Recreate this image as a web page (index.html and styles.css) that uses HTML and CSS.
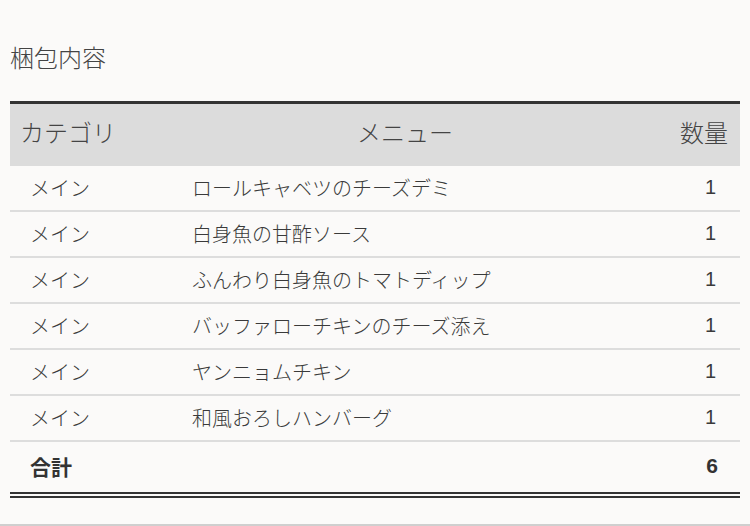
FILE: index.html
```html
<!DOCTYPE html>
<html lang="ja">
<head>
<meta charset="utf-8">
<link rel="stylesheet" href="styles.css">
</head>
<body>
<div class="page">
  <h2 class="title">梱包内容</h2>
  <table class="pack">
    <colgroup>
      <col class="c-cat">
      <col class="c-menu">
      <col class="c-qty">
    </colgroup>
    <thead>
      <tr>
        <th class="cat">カテゴリ</th>
        <th class="menu">メニュー</th>
        <th class="qty">数量</th>
      </tr>
    </thead>
    <tbody>
      <tr><td class="cat">メイン</td><td class="menu">ロールキャベツのチーズデミ</td><td class="qty">1</td></tr>
      <tr><td class="cat">メイン</td><td class="menu">白身魚の甘酢ソース</td><td class="qty">1</td></tr>
      <tr><td class="cat">メイン</td><td class="menu">ふんわり白身魚のトマトディップ</td><td class="qty">1</td></tr>
      <tr><td class="cat">メイン</td><td class="menu">バッファローチキンのチーズ添え</td><td class="qty">1</td></tr>
      <tr><td class="cat">メイン</td><td class="menu">ヤンニョムチキン</td><td class="qty">1</td></tr>
      <tr><td class="cat">メイン</td><td class="menu">和風おろしハンバーグ</td><td class="qty">1</td></tr>
    </tbody>
    <tfoot>
      <tr><td class="cat">合計</td><td class="menu"></td><td class="qty">6</td></tr>
    </tfoot>
  </table>
</div>
</body>
</html>
```

FILE: styles.css
```css
html, body {
  margin: 0;
  padding: 0;
  background: #fbfaf9;
}

body {
  font-family: "Liberation Sans", "Noto Sans CJK JP", sans-serif;
  color: #333;
}

.page {
  box-sizing: border-box;
  height: 526px;
  padding: 41px 10px 0 10px;
  border-bottom: 2px solid #cfcfcf;
}

.title {
  margin: 0;
  font-size: 24px;
  font-weight: 300;
  line-height: 36px;
  color: #444;
}

.pack {
  width: 730px;
  margin-top: 24px;
  border-collapse: collapse;
  table-layout: fixed;
}

.c-cat { width: 162px; }
.c-menu { width: 468px; }
.c-qty { width: 100px; }

.pack thead th {
  background: #dcdcdc;
  border-top: 3px solid #333;
  height: 63px;
  box-sizing: border-box;
  padding: 0 12px 6px 10px;
  font-size: 24px;
  font-weight: 300;
  color: #444;
}

.pack thead th.cat { text-align: left; }
.pack thead th.menu { text-align: center; }
.pack thead th.qty { text-align: right; }

.pack tbody td {
  height: 44px;
  padding: 0 24px 0 20px;
  font-size: 20px;
  font-weight: 300;
  color: #3a3a3a;
  border-bottom: 2px solid #dddddd;
}

.pack td.qty { text-align: right; }

.pack tfoot td {
  height: 48px;
  padding: 0 22px 2px 20px;
  font-size: 21px;
  font-weight: bold;
  border-bottom: 6px double #333;
}
```
